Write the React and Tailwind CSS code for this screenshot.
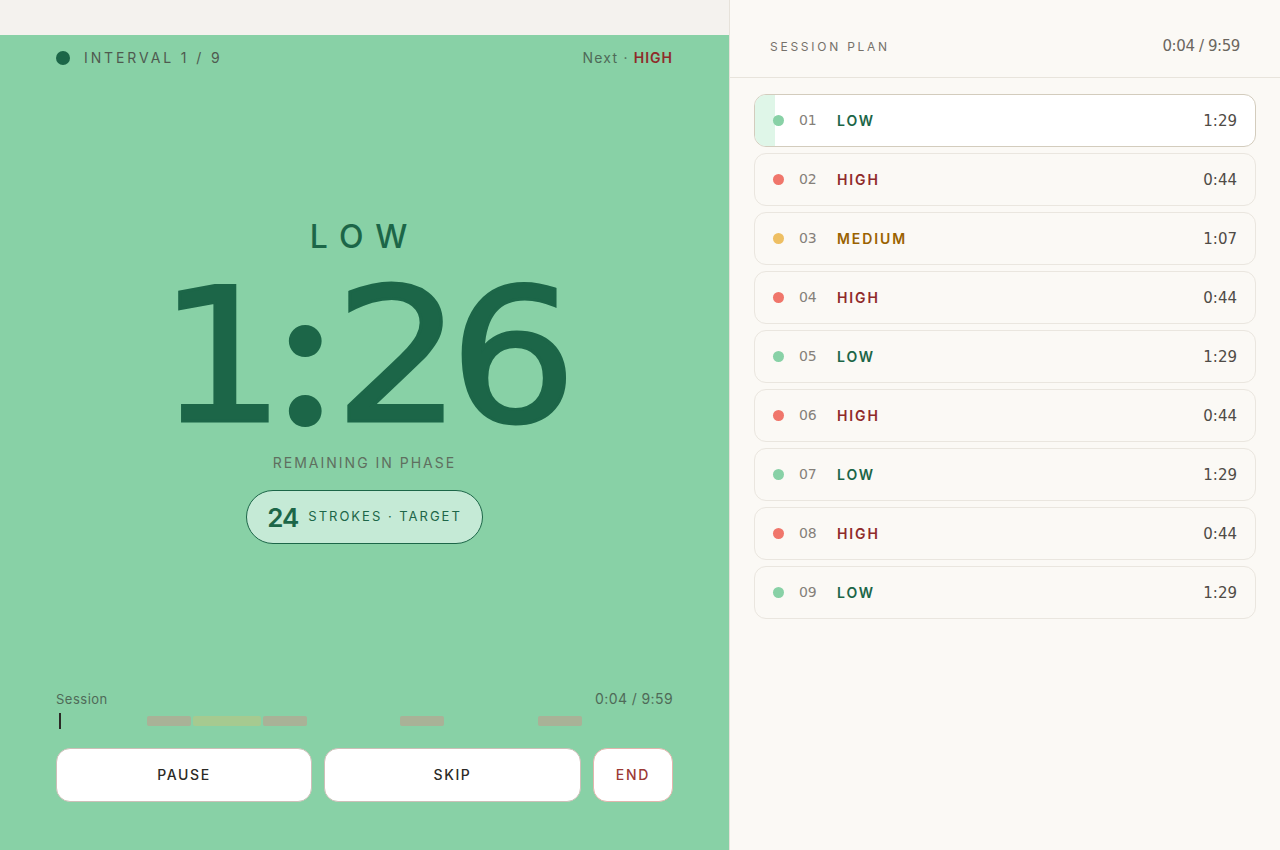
import React from "react";

const plan = [
  { n: "01", name: "LOW", time: "1:29", secs: 89 },
  { n: "02", name: "HIGH", time: "0:44", secs: 44 },
  { n: "03", name: "MEDIUM", time: "1:07", secs: 67 },
  { n: "04", name: "HIGH", time: "0:44", secs: 44 },
  { n: "05", name: "LOW", time: "1:29", secs: 89 },
  { n: "06", name: "HIGH", time: "0:44", secs: 44 },
  { n: "07", name: "LOW", time: "1:29", secs: 89 },
  { n: "08", name: "HIGH", time: "0:44", secs: 44 },
  { n: "09", name: "LOW", time: "1:29", secs: 89 },
];

const dotColor = { LOW: "bg-[#88d1a6]", HIGH: "bg-[#f0766b]", MEDIUM: "bg-[#eebf63]" };
const nameColor = { LOW: "text-[#1c6648]", HIGH: "text-[#8f2a2a]", MEDIUM: "text-[#9a6200]" };
const barColor = { LOW: "bg-transparent", HIGH: "bg-[#a9b297]", MEDIUM: "bg-[#a6ca90]" };

const sans = "font-['Inter',sans-serif]";
const num = "font-['DejaVu_Sans',sans-serif]";

const PlanRow = ({ row, active }) => (
  <div
    className={`relative flex h-[53px] items-center overflow-hidden rounded-[12px] border pl-[18px] pr-[18px] ${
      active ? "border-[#d3ccbd] bg-white" : "border-[#eae6df] bg-[#fbf9f5]"
    }`}
  >
    {active && <div className="absolute inset-y-0 left-0 w-[20px] bg-[#dff6e8]" />}
    <span className={`relative h-[11px] w-[11px] rounded-full ${dotColor[row.name]}`} />
    <span className={`relative ml-[15px] w-[38px] text-[14px] tracking-[-0.2px] text-[#85807a] ${num}`}>{row.n}</span>
    <span className={`relative text-[14px] font-semibold tracking-[1.9px] ${nameColor[row.name]} ${sans}`}>{row.name}</span>
    <span className={`relative ml-auto pt-[2px] text-[15px] text-[#4f4b46] ${num}`}>{row.time}</span>
  </div>
);

export default function App() {
  return (
    <div className={`flex h-[850px] w-[1280px] overflow-hidden ${sans}`}>
      {/* Left: timer */}
      <div className="flex w-[730px] flex-col border-r border-[#e6e2da] bg-[#88d1a6]">
        <div className="h-[35px] bg-[#f4f2ee]" />

        <div className="flex h-[45px] items-center justify-between px-[56px]">
          <div className="flex items-center gap-[14px]">
            <span className="mt-[1px] h-[14px] w-[14px] rounded-full bg-[#1c6648]" />
            <span className="text-[14px] tracking-[2.9px] text-[#4f5a50]">INTERVAL 1 / 9</span>
          </div>
          <div className="text-[14px] tracking-[1.2px] text-[#4f6a58]">
            Next · <span className="font-semibold tracking-[1px] text-[#8f2a2a]">HIGH</span>
          </div>
        </div>

        <div className="mt-[137px] flex flex-col items-center">
          <div className="text-[32px] font-medium leading-[40px] tracking-[12px] text-[#1c6648]">LOW</div>
          <div
            className={`mt-[10px] flex h-[180px] scale-x-[1.08] items-center pr-[7px] text-[186px] leading-[180px] tracking-[-12px] text-[#1c6648] [-webkit-text-stroke:3px_#1c6648] ${num}`}
          >
            <span>1</span>
            <span className="ml-[5px] mr-[12px] scale-x-[0.93] pb-[17px] font-['Lato',sans-serif] text-[200px] font-black leading-[150px] [-webkit-text-stroke:0px]">:</span>
            <span>26</span>
          </div>
          <div className="mt-[6px] text-[14px] leading-[20px] tracking-[2px] text-[#5f6f5f]">REMAINING IN PHASE</div>
          <div className="mt-[17px] flex h-[54px] items-center gap-[10px] rounded-full border border-[#1c6648] bg-[#c5ead6] px-[20px]">
            <span className={`text-[26px] font-semibold tracking-[-1px] text-[#1c6648] ${sans}`}>24</span>
            <span className="text-[13px] tracking-[2px] text-[#1c6648]">STROKES · TARGET</span>
          </div>
        </div>

        <div className="mt-auto px-[56px] pb-[48px]">
          <div className="flex items-center justify-between leading-[20px] text-[#4f6a58]">
            <span className="text-[13px] tracking-[0.5px]">Session</span>
            <span className="text-[14px] tracking-[0.4px]">0:04 / 9:59</span>
          </div>
          <div className="relative mt-[7px] flex h-[10px] gap-[2px]">
            {plan.map((row) => (
              <div key={row.n} className={`rounded-[2px] ${barColor[row.name]}`} style={{ flexGrow: row.secs, flexBasis: 0 }} />
            ))}
            <div className="absolute left-[3px] top-[-3px] h-[16px] w-[2px] bg-[#2b2a26]" />
          </div>
          <div className="mt-[22px] flex gap-[12px]">
            <button className="h-[54px] w-[256px] rounded-[14px] border border-[#cdbfb8] bg-white pb-[2px] text-[14px] font-medium tracking-[1.6px] text-[#2b2a26]">PAUSE</button>
            <button className="h-[54px] w-[257px] rounded-[14px] border border-[#cdbfb8] bg-white pb-[2px] text-[14px] font-medium tracking-[1.6px] text-[#2b2a26]">SKIP</button>
            <button className="h-[54px] w-[80px] rounded-[14px] border border-[#e2b5ad] bg-white pb-[2px] text-[14px] font-medium tracking-[1.8px] text-[#9c3a35]">END</button>
          </div>
        </div>
      </div>

      {/* Right: plan */}
      <div className="flex flex-1 flex-col bg-[#fbf9f5]">
        <div className="flex h-[78px] items-center justify-between border-b border-[#e8e4dc] pl-[40px] pr-[40px] pt-[16px]">
          <span className="text-[12px] tracking-[2.75px] text-[#76716a]">SESSION PLAN</span>
          <span className={`text-[15px] tracking-[-0.4px] text-[#6b665f] ${num}`}>0:04 / 9:59</span>
        </div>
        <div className="flex flex-col gap-[6px] px-[24px] pt-[16px]">
          {plan.map((row, i) => (
            <PlanRow key={row.n} row={row} active={i === 0} />
          ))}
        </div>
      </div>
    </div>
  );
}
